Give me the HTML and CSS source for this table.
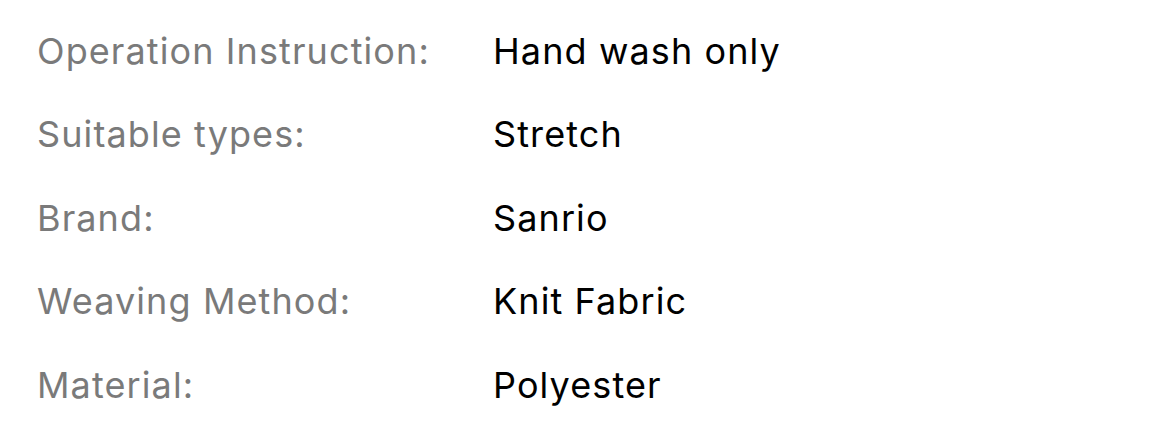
FILE: index.html
```html
<!DOCTYPE html>
<html>
<head>
<meta charset="utf-8">
<link rel="stylesheet" href="styles.css">
</head>
<body>
<dl class="specs">
  <div class="row"><dt class="label">Operation Instruction:</dt><dd class="value">Hand wash only</dd></div>
  <div class="row"><dt class="label">Suitable types:</dt><dd class="value">Stretch</dd></div>
  <div class="row"><dt class="label">Brand:</dt><dd class="value">Sanrio</dd></div>
  <div class="row"><dt class="label">Weaving Method:</dt><dd class="value">Knit Fabric</dd></div>
  <div class="row"><dt class="label">Material:</dt><dd class="value">Polyester</dd></div>
</dl>
</body>
</html>
```
FILE: styles.css
```css
html, body {
  margin: 0;
  padding: 0;
  background: #ffffff;
}
body {
  font-family: Inter, "Noto Sans", sans-serif;
  font-size: 36px;
  letter-spacing: 1.1px;
  -webkit-font-smoothing: antialiased;
}
.specs {
  margin: 0;
  padding: 9.5px 0 0 37px;
  display: flex;
  flex-direction: column;
}
.row {
  display: grid;
  grid-template-columns: 456px 1fr;
  line-height: 83.5px;
}
.label {
  margin: 0;
  color: #7a7a7a;
}
.value {
  margin: 0;
  color: #000000;
}
```
